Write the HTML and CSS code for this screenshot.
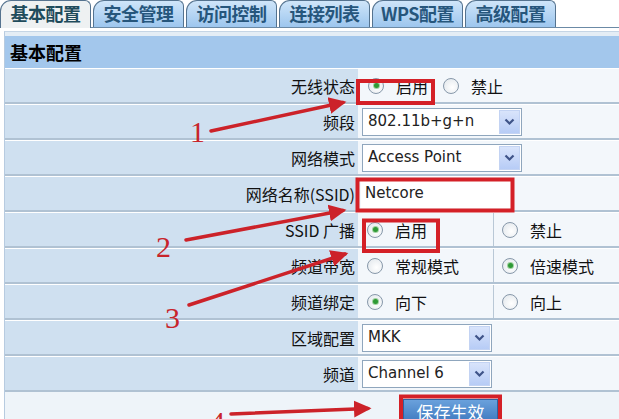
FILE: index.html
```html
<!DOCTYPE html>
<html lang="zh-CN">
<head>
    <meta charset="UTF-8">
    <title>基本配置</title>
    <link rel="stylesheet" href="styles.css">
</head>
<body>
    <div class="tabs">
        <span class="tab active">基本配置</span>
        <span class="tab">安全管理</span>
        <span class="tab">访问控制</span>
        <span class="tab">连接列表</span>
        <span class="tab">WPS配置</span>
        <span class="tab">高级配置</span>
    </div>

    <div class="panel">
        <div class="panel-head">基本配置</div>

        <div class="row">
            <div class="label">无线状态</div>
            <div class="value">
                <span class="opt"><span class="radio on"></span>启用</span>
                <span class="opt"><span class="radio"></span>禁止</span>
            </div>
        </div>

        <div class="row">
            <div class="label">频段</div>
            <div class="value">
                <div class="select">802.11b+g+n<span class="drop"><svg width="11" height="8" viewBox="0 0 11 8"><path d="M1.5 1.5 L5.5 5.5 L9.5 1.5" fill="none" stroke="#3f5488" stroke-width="2.2"/></svg></span></div>
            </div>
        </div>

        <div class="row">
            <div class="label">网络模式</div>
            <div class="value">
                <div class="select">Access Point<span class="drop"><svg width="11" height="8" viewBox="0 0 11 8"><path d="M1.5 1.5 L5.5 5.5 L9.5 1.5" fill="none" stroke="#3f5488" stroke-width="2.2"/></svg></span></div>
            </div>
        </div>

        <div class="row">
            <div class="label">网络名称(SSID)</div>
            <div class="value">
                <div class="input">Netcore</div>
            </div>
        </div>

        <div class="row">
            <div class="label">SSID 广播</div>
            <div class="value split">
                <div class="cell"><span class="opt"><span class="radio on"></span>启用</span></div>
                <div class="cell"><span class="opt"><span class="radio"></span>禁止</span></div>
            </div>
        </div>

        <div class="row">
            <div class="label">频道带宽</div>
            <div class="value split">
                <div class="cell"><span class="opt"><span class="radio"></span>常规模式</span></div>
                <div class="cell"><span class="opt"><span class="radio on"></span>倍速模式</span></div>
            </div>
        </div>

        <div class="row">
            <div class="label">频道绑定</div>
            <div class="value split">
                <div class="cell"><span class="opt"><span class="radio on"></span>向下</span></div>
                <div class="cell"><span class="opt"><span class="radio"></span>向上</span></div>
            </div>
        </div>

        <div class="row">
            <div class="label">区域配置</div>
            <div class="value">
                <div class="select short">MKK<span class="drop"><svg width="11" height="8" viewBox="0 0 11 8"><path d="M1.5 1.5 L5.5 5.5 L9.5 1.5" fill="none" stroke="#3f5488" stroke-width="2.2"/></svg></span></div>
            </div>
        </div>

        <div class="row">
            <div class="label">频道</div>
            <div class="value">
                <div class="select short">Channel 6<span class="drop"><svg width="11" height="8" viewBox="0 0 11 8"><path d="M1.5 1.5 L5.5 5.5 L9.5 1.5" fill="none" stroke="#3f5488" stroke-width="2.2"/></svg></span></div>
            </div>
        </div>

        <div class="foot">
            <button class="save-btn">保存生效</button>
        </div>
    </div>

    <!-- red hand-drawn annotations over the screenshot -->
    <svg class="marks" width="619" height="419" viewBox="0 0 619 419">
        <defs>
            <marker id="head" markerWidth="6" markerHeight="6" refX="4" refY="3" orient="auto" markerUnits="strokeWidth">
                <path d="M0 0.6 L5 3 L0 5.4 Z" fill="#cc2229"/>
            </marker>
        </defs>
        <g fill="none" stroke="#d42027" stroke-width="4">
            <rect x="358" y="81" width="75" height="22"/>
            <rect x="357.5" y="179.5" width="155" height="31"/>
            <rect x="364" y="220.5" width="74" height="30.5"/>
            <rect x="401" y="396.5" width="99" height="30"/>
        </g>
        <g stroke="#cc2229" stroke-width="3.5" stroke-linecap="round" marker-end="url(#head)">
            <line x1="211" y1="131" x2="343" y2="102.5"/>
            <line x1="186" y1="240" x2="343" y2="210.5"/>
            <line x1="189" y1="305" x2="345" y2="254"/>
            <line x1="231" y1="414" x2="368" y2="408.5"/>
        </g>
        <g class="num">
            <text x="190" y="142">1</text>
            <text x="156" y="257">2</text>
            <text x="165" y="328">3</text>
            <text x="210" y="432">4</text>
        </g>
    </svg>
</body>
</html>
```

FILE: styles.css
```css
body {
    margin: 0;
    width: 619px;
    height: 419px;
    overflow: hidden;
    position: relative;
    background: #fff;
    font-family: "Noto Sans CJK SC", sans-serif;
    color: #111;
}
.tabs {
    display: flex;
    gap: 2px;
    height: 28px;
    box-sizing: border-box;
    border-bottom: 1px solid #6b8aa6;
}
.tab {
    width: 91px;
    height: 27px;
    box-sizing: border-box;
    border: 1px solid #55738f;
    border-bottom: none;
    border-radius: 11px 6px 0 0;
    background: linear-gradient(#cfe5f9, #9dc6ee);
    color: #26567c;
    font-weight: bold;
    font-size: 18px;
    line-height: 25px;
    text-align: center;
    letter-spacing: -0.5px;
}
.tab.active {
    height: 28px;
    background: #eef1f2;
    color: #1f4c5c;
}
.panel {
    margin: 3px 0 0 4px;
    padding-top: 4px;
    border-top: 1px solid #c5d5e5;
    border-left: 1px solid #b7cbe0;
    background: #e4edf5;
}
.panel-head {
    height: 32px;
    padding-left: 5px;
    background: #a3c7ec;
    font-weight: bold;
    font-size: 18px;
    line-height: 32px;
    color: #000;
}
.row {
    display: grid;
    grid-template-columns: 353px 1fr;
    height: 36px;
    box-sizing: border-box;
    border-top: 1px solid #fff;
    border-bottom: 2px solid #b0c2d3;
}
.label {
    display: flex;
    align-items: center;
    justify-content: flex-end;
    padding-right: 3px;
    background: #cfe0f0;
    font-size: 16px;
    line-height: 1;
    white-space: nowrap;
}
.value {
    display: flex;
    align-items: center;
    padding-left: 4px;
    background: #f3f7fb;
    font-size: 16px;
    line-height: 1;
}
.value.split {
    display: grid;
    grid-template-columns: 135px 1fr;
    align-items: stretch;
    padding-left: 0;
}
.cell {
    display: flex;
    align-items: center;
    padding-left: 9px;
}
.cell + .cell {
    border-left: 1px solid #b9c8d6;
    padding-left: 8px;
}
.opt {
    display: flex;
    align-items: center;
    gap: 12px;
    margin-left: 6px;
    margin-right: 9px;
}
.cell .opt {
    margin-left: 0;
}
.radio {
    width: 16px;
    height: 16px;
    box-sizing: border-box;
    border: 1px solid #8798aa;
    border-radius: 50%;
    background: radial-gradient(circle at 60% 60%, #fff, #dfe5ea);
    display: flex;
    align-items: center;
    justify-content: center;
}
.radio.on::after {
    content: "";
    width: 5px;
    height: 5px;
    border-radius: 50%;
    background: #2f9a35;
    box-shadow: 0 0 0 1px #9fd0a0;
}
.select {
    display: flex;
    align-items: center;
    width: 160px;
    height: 28px;
    box-sizing: border-box;
    padding-left: 5px;
    border: 1px solid #8fa6bd;
    background: #fff;
    font-family: "DejaVu Sans", sans-serif;
    font-size: 15px;
    color: #222;
}
.select.short {
    width: 130px;
}
.drop {
    margin-left: auto;
    margin-right: 1px;
    width: 21px;
    height: 24px;
    box-sizing: border-box;
    border: 1px solid #c3d3f3;
    background: linear-gradient(#d9e4fb, #b7ccf6);
    display: flex;
    align-items: center;
    justify-content: center;
}
.input {
    width: 152px;
    height: 29px;
    box-sizing: border-box;
    padding-left: 4px;
    margin-left: -1px;
    background: #fff;
    font-family: "DejaVu Sans", sans-serif;
    font-size: 15px;
    line-height: 29px;
    color: #222;
}
.foot {
    height: 27px;
    padding: 7px 0 0 398px;
    box-sizing: border-box;
    background: #eef4f9;
}
.save-btn {
    width: 95px;
    height: 26px;
    padding: 0;
    border: 1px solid #2f62a0;
    background: linear-gradient(#6aa1dc, #3a76bd);
    color: #fff;
    font-family: "Noto Sans CJK SC", sans-serif;
    font-size: 17px;
    line-height: 22px;
}
.marks {
    position: absolute;
    top: 0;
    left: 0;
    pointer-events: none;
}
.num text {
    font-family: "Liberation Serif", serif;
    font-size: 30px;
    fill: #c8242b;
}
```
